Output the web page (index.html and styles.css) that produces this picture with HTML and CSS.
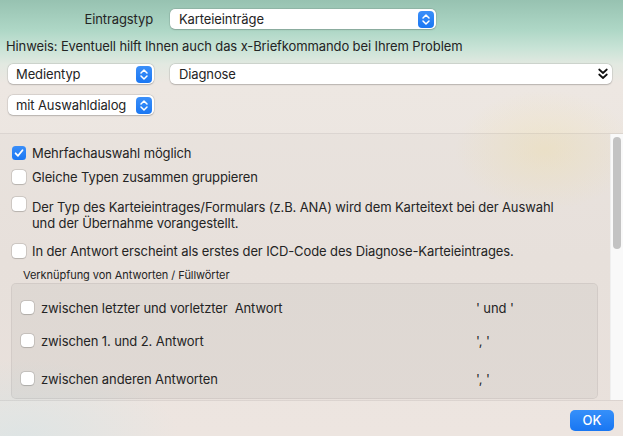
FILE: index.html
```html
<!DOCTYPE html>
<html lang="de">
<head>
<meta charset="utf-8">
<title>Eintragstyp</title>
<link rel="stylesheet" href="styles.css">
</head>
<body>
<div class="window">
  <div class="header">
    <div class="row r1">
      <span class="lbl">Eintragstyp</span>
      <div class="popup type">
        <span class="ptext">Karteieinträge</span>
        <span class="stepper"><svg width="16" height="17" viewBox="0 0 16 17"><path d="M5 7 L8 4 L11 7 M5 10 L8 13 L11 10" fill="none" stroke="#fff" stroke-width="1.5" stroke-linecap="round" stroke-linejoin="round"/></svg></span>
      </div>
    </div>
    <div class="hint">Hinweis: Eventuell hilft Ihnen auch das x-Briefkommando bei Ihrem Problem</div>
    <div class="row r3">
      <div class="popup small">
        <span class="ptext">Medientyp</span>
        <span class="stepper"><svg width="16" height="17" viewBox="0 0 16 17"><path d="M5 7 L8 4 L11 7 M5 10 L8 13 L11 10" fill="none" stroke="#fff" stroke-width="1.5" stroke-linecap="round" stroke-linejoin="round"/></svg></span>
      </div>
      <div class="popup pulldown">
        <span class="ptext">Diagnose</span>
        <svg class="dchev" width="10" height="12" viewBox="0 0 10 12"><path d="M1.2 1.5 L5 5 L8.8 1.5 M1.2 6.5 L5 10 L8.8 6.5" fill="none" stroke="#111" stroke-width="1.7" stroke-linecap="round" stroke-linejoin="round"/></svg>
      </div>
    </div>
    <div class="row r4">
      <div class="popup small">
        <span class="ptext">mit Auswahldialog</span>
        <span class="stepper"><svg width="16" height="17" viewBox="0 0 16 17"><path d="M5 7 L8 4 L11 7 M5 10 L8 13 L11 10" fill="none" stroke="#fff" stroke-width="1.5" stroke-linecap="round" stroke-linejoin="round"/></svg></span>
      </div>
    </div>
  </div>

  <div class="scroll">
    <div class="content">
      <div class="check c1">
        <span class="box on"><svg width="14" height="14" viewBox="0 0 14 14"><path d="M3.6 7.3 L6 9.8 L10.5 4.2" fill="none" stroke="#fff" stroke-width="1.8" stroke-linecap="round" stroke-linejoin="round"/></svg></span>
        <span class="ctext">Mehrfachauswahl möglich</span>
      </div>
      <div class="check c2">
        <span class="box"></span>
        <span class="ctext">Gleiche Typen zusammen gruppieren</span>
      </div>
      <div class="check c3">
        <span class="box"></span>
        <span class="ctext">Der Typ des Karteieintrages/Formulars (z.B. ANA) wird dem Karteitext bei der Auswahl<br>und der Übernahme vorangestellt.</span>
      </div>
      <div class="check c4">
        <span class="box"></span>
        <span class="ctext">In der Antwort erscheint als erstes der ICD-Code des Diagnose-Karteieintrages.</span>
      </div>
      <div class="glabel">Verknüpfung von Antworten / Füllwörter</div>
      <div class="group">
        <div class="grow g1">
          <div class="check"><span class="box"></span><span class="ctext">zwischen letzter und vorletzter&nbsp; Antwort</span></div>
          <span class="fill">' und '</span>
        </div>
        <div class="grow g2">
          <div class="check"><span class="box"></span><span class="ctext">zwischen 1. und 2. Antwort</span></div>
          <span class="fill">', '</span>
        </div>
        <div class="grow g3">
          <div class="check"><span class="box"></span><span class="ctext">zwischen anderen Antworten</span></div>
          <span class="fill">', '</span>
        </div>
      </div>
    </div>
    <div class="scrollbar"><div class="thumb"></div></div>
  </div>

  <div class="footer">
    <button class="ok">OK</button>
  </div>
</div>
</body>
</html>
```

FILE: styles.css
```css
* { box-sizing: border-box; }
html, body { margin: 0; padding: 0; }
body {
  width: 623px;
  height: 436px;
  overflow: hidden;
  font-family: Inter, "Noto Sans", "Liberation Sans", sans-serif;
  font-size: 13px;
  letter-spacing: -0.11px;
  color: #242424;
}
.window {
  width: 623px;
  height: 436px;
  display: flex;
  flex-direction: column;
  background:
    radial-gradient(ellipse 90px 60px at 545px 150px, rgba(240, 226, 185, 0.55), rgba(240, 226, 185, 0) 100%),
    radial-gradient(ellipse 160px 80px at 20px 440px, rgba(215, 228, 230, 0.7), rgba(215, 228, 230, 0) 100%),
    linear-gradient(180deg, #97c2b1 0px, #aed7c6 30px, #c8e3d6 48px, #e2e9e1 64px, #ede7e2 84px, #ebe4df 260px, #ede5e0 436px);
}
.header {
  padding-top: 9px;
  height: 133px;
  flex: none;
}
.row { display: flex; align-items: center; }
.lbl {
  width: 153px;
  text-align: right;
  margin-right: 17px;
  line-height: 20px;
}
.popup {
  position: relative;
  height: 20px;
  background: #fff;
  border-radius: 5px;
  box-shadow: 0 0 0 0.5px rgba(0, 0, 0, 0.12), 0 0.5px 1.5px rgba(0, 0, 0, 0.18);
  display: flex;
  align-items: center;
  padding-left: 9px;
}
.ptext { flex: 1; line-height: 20px; white-space: nowrap; }
.popup.type { width: 266px; }
.popup.small { width: 146px; margin-left: 8px; padding-left: 8px; }
.popup.pulldown { width: 442px; margin-left: 16px; }
.stepper {
  width: 16px;
  height: 17px;
  margin-right: 2px;
  border-radius: 4px;
  background: linear-gradient(180deg, #3b8ff9 0%, #1a77f3 100%);
  display: flex;
}
.dchev { margin-right: 4px; }
.hint {
  margin-top: 9px;
  padding-left: 6px;
  line-height: 16px;
  white-space: nowrap;
}
.r3 { margin-top: 10px; }
.r4 { margin-top: 11px; }

.scroll {
  height: 268px;
  flex: none;
  display: flex;
  border-top: 1px solid rgba(0, 0, 0, 0.07);
  border-bottom: 1px solid rgba(0, 0, 0, 0.07);
}
.content {
  flex: 1;
  padding: 11px 0 0 12px;
  background: rgba(0, 0, 0, 0.015);
}
.check { display: flex; align-items: flex-start; }
.box {
  flex: none;
  width: 14px;
  height: 14px;
  margin-top: 1px;
  margin-right: 6px;
  border-radius: 3.5px;
  background: #fff;
  box-shadow: 0 0 0 0.5px rgba(0, 0, 0, 0.2), 0 0.5px 1px rgba(0, 0, 0, 0.12);
  display: flex;
}
.box.on { background: linear-gradient(180deg, #3a8ef9 0%, #1a77f3 100%); box-shadow: none; }
.ctext { line-height: 16px; white-space: nowrap; }
.c2 { margin-top: 8px; }
.c3 { margin-top: 14px; }
.c3 .box { margin-top: -2px; }
.c4 { margin-top: 12px; }
.glabel {
  margin-top: 9px;
  padding-left: 11px;
  font-size: 11px;
  letter-spacing: -0.05px;
  line-height: 14px;
  white-space: nowrap;
}
.group {
  margin-top: 1px;
  width: 587px;
  height: 116px;
  margin-left: -1px;
  border: 1px solid rgba(0, 0, 0, 0.06);
  border-radius: 5px;
  background: rgba(0, 0, 0, 0.035);
  padding: 16px 0 0 9px;
}
.grow { display: flex; align-items: center; }
.grow .check { width: 455px; }
.grow .box { width: 13px; height: 13px; margin-top: 1px; margin-right: 7px; }
.fill { line-height: 16px; white-space: pre; }
.g2 { margin-top: 17px; }
.g3 { margin-top: 22px; }

.scrollbar {
  width: 13px;
  flex: none;
  background: #f9f9f9;
  border-left: 1px solid rgba(0, 0, 0, 0.04);
  padding: 3px 0 0 2px;
}
.thumb {
  width: 8px;
  height: 112px;
  border-radius: 4px;
  background: #c3c3c3;
}
.footer {
  flex: 1;
  display: flex;
  justify-content: flex-end;
  align-items: flex-start;
  padding: 9px 9px 0 0;
}
.ok {
  width: 44px;
  height: 21px;
  border: none;
  border-radius: 5px;
  background: linear-gradient(180deg, #3690fa 0%, #1876f2 100%);
  color: #fff;
  font-family: Inter, "Noto Sans", "Liberation Sans", sans-serif;
  font-size: 13px;
  font-weight: 500;
  padding: 0;
  line-height: 21px;
}
```
